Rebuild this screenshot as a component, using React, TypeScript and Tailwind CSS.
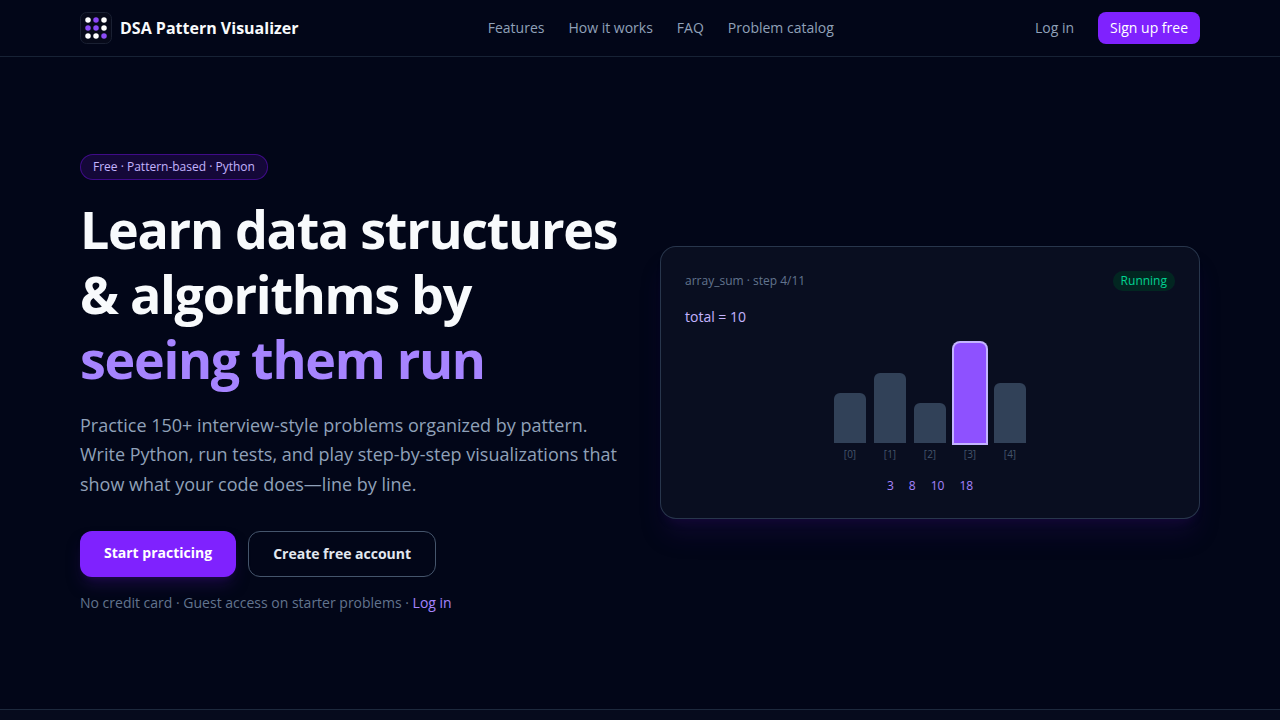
const navLinks = [
  { label: "Features", href: "#features" },
  { label: "How it works", href: "#how-it-works" },
  { label: "FAQ", href: "#faq" },
  { label: "Problem catalog", href: "#problems" },
];

const bars = [
  { height: 50, active: false },
  { height: 70, active: false },
  { height: 40, active: false },
  { height: 100, active: true },
  { height: 60, active: false },
];

const totals = [3, 8, 10, 18];

function Logo() {
  const dots = [
    "#ffffff", "#8b45f6", "#ffffff",
    "#8b4cf6", "#8b4cf6", "#ffffff",
    "#ffffff", "#ffffff", "#8b4cf6",
  ];

  return (
    <svg className="h-8 w-8" viewBox="0 0 32 32" aria-hidden="true">
      <rect x="0.5" y="0.5" width="31" height="31" rx="6" fill="#070a1a" stroke="#1a2032" />
      {dots.map((fill, i) => (
        <circle key={i} cx={8 + (i % 3) * 8} cy={8 + Math.floor(i / 3) * 8} r="2.75" fill={fill} />
      ))}
    </svg>
  );
}

function Header() {
  return (
    <header className="border-b border-slate-800/80 bg-slate-950">
      <div className="mx-auto flex h-14 max-w-6xl items-center justify-between px-4">
        <a href="#top" className="flex items-center gap-2 font-bold text-slate-50">
          <Logo />
          DSA Pattern Visualizer
        </a>

        <nav className="flex items-center gap-6 text-sm text-slate-400">
          {navLinks.map((link) => (
            <a key={link.label} href={link.href} className="hover:text-slate-200">
              {link.label}
            </a>
          ))}
        </nav>

        <div className="flex items-center gap-3 text-sm">
          <a href="#login" className="px-3 py-1.5 text-slate-400 hover:text-slate-200">
            Log in
          </a>
          <a href="#signup" className="rounded-lg bg-violet-600 px-3 py-1.5 text-white hover:bg-violet-500">
            Sign up free
          </a>
        </div>
      </div>
    </header>
  );
}

function PreviewCard() {
  return (
    <div className="rounded-2xl border border-slate-700/80 bg-[#090e20] p-6 shadow-xl shadow-violet-950/25">
      <div className="flex items-center justify-between text-xs">
        <span className="text-slate-500">array_sum · step 4/11</span>
        <span className="rounded-full bg-emerald-950/80 px-2 py-0.5 text-emerald-400">Running</span>
      </div>

      <p className="mt-4 text-sm text-violet-300">total = 10</p>

      <div className="mt-4 flex items-end justify-center gap-2">
        {bars.map((bar, i) => (
          <div key={i} className="flex w-8 flex-col items-center gap-1">
            <div
              className={`w-full rounded-t-md ${
                bar.active ? "bg-violet-500 ring-2 ring-violet-300" : "bg-slate-700"
              }`}
              style={{ height: bar.height }}
            />
            <span className="text-[10px] leading-[15px] text-slate-600">[{i}]</span>
          </div>
        ))}
      </div>

      <div className="mt-4 flex justify-center gap-[15px] text-xs text-violet-400">
        {totals.map((total) => (
          <span key={total}>{total}</span>
        ))}
      </div>
    </div>
  );
}

function Hero() {
  return (
    <section className="border-b border-slate-800">
      <div className="mx-auto grid max-w-6xl grid-cols-2 items-center gap-10 px-4 py-24">
        <div>
          <div>
            <span className="inline-block rounded-full border border-violet-800/60 bg-violet-950/40 px-3 py-1 text-xs text-violet-300">
              Free · Pattern-based · Python
            </span>
          </div>

          <h1 className="mt-4 text-[52px] leading-tight font-bold tracking-tight text-slate-50">
            Learn data structures &amp; algorithms by{" "}
            <span className="block text-violet-400">seeing them run</span>
          </h1>

          <p className="mt-5 text-lg leading-relaxed text-slate-400">
            Practice 150+ interview-style problems organized by pattern. Write Python, run tests,
            and play step-by-step visualizations that show what your code does—line by line.
          </p>

          <div className="mt-8 flex gap-3 text-sm font-bold">
            <a
              href="#practice"
              className="rounded-xl bg-violet-600 px-6 py-3 text-white shadow-lg shadow-violet-950/50 hover:bg-violet-500"
            >
              Start practicing
            </a>
            <a
              href="#signup"
              className="rounded-xl border border-slate-600 px-6 py-3 text-slate-200 hover:border-slate-500"
            >
              Create free account
            </a>
          </div>

          <p className="mt-4 text-sm text-slate-500">
            No credit card · Guest access on starter problems ·{" "}
            <a href="#login" className="text-violet-400 hover:text-violet-300">
              Log in
            </a>
          </p>
        </div>

        <PreviewCard />
      </div>
    </section>
  );
}

export default function App() {
  return (
    <div className="flex min-h-screen flex-col bg-slate-950 font-['Open_Sans',sans-serif] text-slate-50">
      <Header />
      <main className="flex flex-1 flex-col">
        <Hero />
        <section id="features" className="flex-1 bg-slate-900/30" />
      </main>
    </div>
  );
}
